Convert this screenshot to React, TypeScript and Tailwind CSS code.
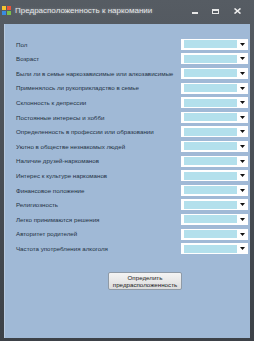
import React from 'react';

// Form fields, in the order they appear on the window
const FIELDS = [
    'Пол',
    'Возраст',
    'Были ли в семье наркозависимые или алкозависимые',
    'Применялось ли рукоприкладство в семье',
    'Склонность к депрессии',
    'Постоянные интересы и хобби',
    'Определенность в профессии или образовании',
    'Уютно в обществе незнакомых людей',
    'Наличие друзей-наркоманов',
    'Интерес к культуре наркоманов',
    'Финансовое положение',
    'Религиозность',
    'Легко принимаются решения',
    'Авторитет родителей',
    'Частота употребления алкоголя',
];

function Combo() {
    return (
        <div className="w-[67px] h-[11px] bg-white flex items-center pl-[3px] pr-[1px]">
            <div className="h-[8px] w-[53px] bg-[#b3e0ec]" />
            <div className="flex-1 flex items-center justify-center">
                <svg width="5" height="3" viewBox="0 0 5 3">
                    <path d="M0 0 H5 L2.5 3 Z" fill="#111" />
                </svg>
            </div>
        </div>
    );
}

function TitleButtons() {
    return (
        <div className="flex items-start gap-[6px] pr-[8px]">
            <div className="w-[14px] h-[10px] flex items-end justify-center pb-[2px]">
                <div className="w-[6px] h-[2px] bg-[#e6e6e6]" />
            </div>
            <div className="w-[14px] h-[10px] flex items-center justify-center">
                <div className="w-[7px] h-[5px] border border-[#e6e6e6] border-t-2" />
            </div>
            <div className="w-[18px] h-[10px] flex items-center justify-center">
                <svg width="7" height="6" viewBox="0 0 7 6">
                    <path d="M0.5 0.5 L6.5 5.5 M6.5 0.5 L0.5 5.5" stroke="#eee" strokeWidth="1.6" />
                </svg>
            </div>
        </div>
    );
}

export default function App() {
    return (
        <div
            className="w-[254px] h-[341px] bg-gradient-to-b from-[#565c63] to-[#3c4147] flex flex-col"
            style={{ fontFamily: '"Liberation Sans", Arial, sans-serif' }}
        >
            {/* Title bar */}
            <div className="h-[24px] flex items-start justify-between pt-[6px]">
                <div className="flex items-center gap-[4px] pl-[2px]">
                    <svg width="9" height="9" viewBox="0 0 9 9">
                        <rect x="0" y="0" width="4" height="4" fill="#f4c431" />
                        <rect x="5" y="0" width="4" height="4" fill="#e8553b" />
                        <rect x="0" y="5" width="4" height="4" fill="#3a8be0" />
                        <rect x="5" y="5" width="4" height="4" fill="#7cc04b" />
                    </svg>
                    <span className="text-[8px] leading-[9px] text-[#e4e6e8] [text-shadow:0_0_3px_rgba(255,255,255,0.35)]">
                        Предрасположенность к наркомании
                    </span>
                </div>
                <TitleButtons />
            </div>

            {/* Client area */}
            <div className="flex-1 mx-[4px] mb-[3px] bg-[#a0b9d6] border-l border-[#b9cbe0] flex flex-col pt-[13px]">
                <div className="flex flex-col">
                    {FIELDS.map((label) => (
                        <div key={label} className="h-[14.6px] flex items-center justify-between pl-[11px] pr-[2px]">
                            <span className="text-[6.2px] text-[#243244] whitespace-nowrap">{label}</span>
                            <Combo />
                        </div>
                    ))}
                </div>

                {/* Action button */}
                <div className="mt-[16px] ml-[103px]">
                    <button className="w-[74px] h-[18px] bg-gradient-to-b from-[#f4f4f4] to-[#dcdcdc] border border-[#8f9aa6] rounded-[2px] flex flex-col items-center justify-center text-[6.2px] leading-[7px] text-[#222]">
                        <span>Определить</span>
                        <span>предрасположенность</span>
                    </button>
                </div>
            </div>
        </div>
    );
}
